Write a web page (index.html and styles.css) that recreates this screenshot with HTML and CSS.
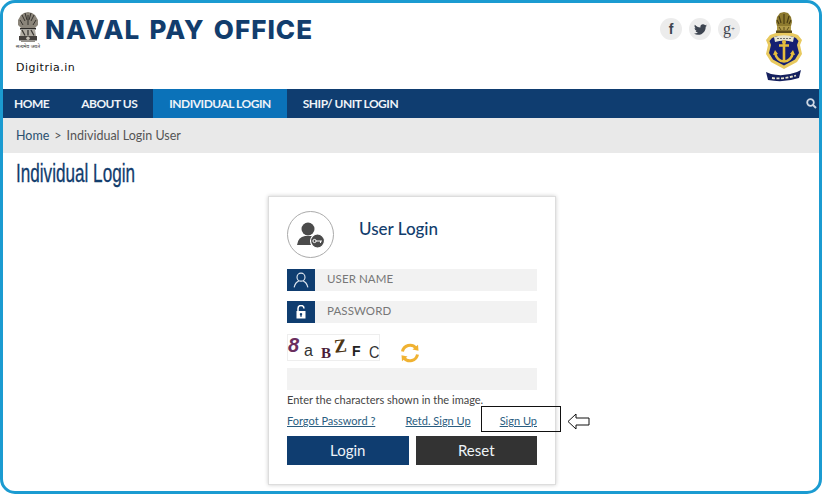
FILE: index.html
```html
<!DOCTYPE html>
<html lang="en">
<head>
    <meta charset="UTF-8">
    <title>Naval Pay Office</title>
    <link rel="stylesheet" href="styles.css">
</head>
<body>
    <div class="frame">
        <div class="header">
            <div class="brand">
                <div class="brand-top">
                    <svg class="emblem" width="28" height="37" viewBox="0 0 28 37">
                        <path d="M7 3 L10 1 L14 0 L18 1 L21 3 L24 8 L24 13 L21 16 H7 L4 13 L4 8Z" fill="#8b857a"/>
                        <path d="M8 3 L11 9 M11 1 L13 8 M17 1 L15 8 M20 3 L17 9 M6 8 L9 13 M22 8 L19 13 M14 3 V13" stroke="#35322d" stroke-width="1"/>
                        <rect x="6" y="16" width="16" height="1.500" fill="#2c2a27"/>
                        <path d="M7 17.500 H21 L22 24 H6Z" fill="#b0aba1"/>
                        <path d="M8 18 L11 23.500 M17 18 L20 23.500 M14 18 V23.500" stroke="#3a3733" stroke-width="1.300"/>
                        <rect x="5" y="24" width="18" height="4.500" fill="#46423e"/>
                        <circle cx="14" cy="26.200" r="1.700" fill="#c4bfb5"/>
                        <rect x="7" y="28.500" width="14" height="1.500" fill="#94908a"/>
                        <text x="14" y="36" class="emblem-text" text-anchor="middle">सत्यमेव जयते</text>
                    </svg>
                    <span class="brand-name">NAVAL PAY OFFICE</span>
                </div>
                <div class="brand-sub">Digitria.in</div>
            </div>
            <div class="social">
                <a href="#" class="social-btn social-f">f</a>
                <a href="#" class="social-btn">
                    <svg width="13" height="13" viewBox="0 0 24 24"><path fill="#3d4450" d="M23.953 4.57a10 10 0 01-2.825.775 4.958 4.958 0 002.163-2.723c-.951.555-2.005.959-3.127 1.184a4.92 4.92 0 00-8.384 4.482C7.69 8.095 4.067 6.13 1.64 3.162a4.822 4.822 0 00-.666 2.475c0 1.71.87 3.213 2.188 4.096a4.904 4.904 0 01-2.228-.616v.06a4.923 4.923 0 003.946 4.827 4.996 4.996 0 01-2.212.085 4.936 4.936 0 004.604 3.417 9.867 9.867 0 01-6.102 2.105c-.39 0-.779-.023-1.17-.067a13.995 13.995 0 007.557 2.209c9.053 0 13.998-7.496 13.998-14.015 0-.21-.005-.42-.015-.63A9.935 9.935 0 0024 4.59z"/></svg>
                </a>
                <a href="#" class="social-btn social-g">g<sup>+</sup></a>
            </div>
            <svg class="crest" width="40" height="71" viewBox="0 0 40 71">
                <path d="M13 5 L16 1 L20 0 L24 1 L27 5 L28 10 L27 14 L13 14 L12 10Z" fill="#8d7a2f"/>
                <path d="M15 4 L17 11 M20 2 V12 M25 4 L23 11 M13 8 L15 12 M27 8 L25 12" stroke="#4a3d14" stroke-width="1.200"/>
                <rect x="13" y="14" width="14" height="5" fill="#b09a48"/>
                <path d="M15 15 L17 18 M20 15 V18 M25 15 L23 18" stroke="#5d4e1c"/>
                <rect x="12" y="18.500" width="16" height="3" fill="#5d4e1c"/>
                <path d="M6 23 L12 21 H28 L34 23 L38 28 L36 33 L38 42 L33 50 L20 57 L7 50 L2 42 L4 33 L2 28Z" fill="#e8c95e"/>
                <path d="M8 26 L13 24 H27 L32 26 L34.500 29 L33 33 L35 41 L31 47.500 L20 53.500 L9 47.500 L5 41 L7 33 L5.500 29Z" fill="#151f72"/>
                <path d="M10 25 Q20 21.500 30 25 L29 30 Q20 27 11 30Z" fill="#e6e4d0"/>
                <path d="M13 26.500 H27" stroke="#555" stroke-width="0.800" stroke-dasharray="2 1"/>
                <path d="M20 30 V49 M15 33.500 H25 M11 41 Q13 49 20 49.500 Q27 49 29 41" stroke="#e4bd3e" stroke-width="2.600" fill="none"/>
                <path d="M9 43 L11 38 L14 42Z M31 43 L29 38 L26 42Z" fill="#e4bd3e"/>
                <circle cx="20" cy="30" r="2" fill="#e4bd3e"/>
                <path d="M2 60 L7 62 Q20 65 33 60 L37 58 L35 66 Q20 71 4 68Z" fill="#15205e"/>
                <path d="M8 66 Q20 67.500 32 63.500" stroke="#e6e4d0" stroke-width="1.800" stroke-dasharray="3 1.500" fill="none"/>
            </svg>
        </div>

        <div class="nav">
            <a href="#" class="nav-item nav-first">HOME</a>
            <a href="#" class="nav-item">ABOUT US</a>
            <a href="#" class="nav-item nav-active">INDIVIDUAL LOGIN</a>
            <a href="#" class="nav-item">SHIP/ UNIT LOGIN</a>
            <svg class="nav-search" width="11" height="11" viewBox="0 0 11 11">
                <circle cx="4.500" cy="4.500" r="3.300" fill="none" stroke="#cfd8e4" stroke-width="1.800"/>
                <path d="M7 7 L10 10" stroke="#cfd8e4" stroke-width="2"/>
            </svg>
        </div>

        <div class="crumb">
            <a href="#">Home</a>
            <span class="crumb-sep">&gt;</span>
            <span>Individual Login User</span>
        </div>

        <h1 class="page-title">Individual Login</h1>

        <!-- login box -->
        <div class="login">
            <div class="login-head">
                <div class="avatar">
                    <svg width="30" height="28" viewBox="0 0 30 28">
                        <circle cx="12" cy="8" r="6.500" fill="#4b4b4b"/>
                        <path d="M1 24 Q2 16 9 15 L15 15 Q21 16 23 22 L23 24Z" fill="#4b4b4b"/>
                        <circle cx="21.500" cy="20" r="7" fill="#4b4b4b" stroke="#fff" stroke-width="1.200"/>
                        <circle cx="18.500" cy="20" r="1.600" fill="none" stroke="#fff"/>
                        <path d="M20 20 H26 M24.500 20 V22" stroke="#fff" stroke-width="1.100"/>
                    </svg>
                </div>
                <h2 class="login-title">User Login</h2>
            </div>

            <div class="login-input">
                <span class="input-icon">
                    <svg width="16" height="16" viewBox="0 0 14 14" fill="none" stroke="#dfe6ef" stroke-width="1">
                        <circle cx="7" cy="4.500" r="3.500"/>
                        <path d="M1 13.500 Q2 9 5 8 M13 13.500 Q12 9 9 8"/>
                    </svg>
                </span>
                <span class="input-text">USER NAME</span>
            </div>
            <div class="login-input">
                <span class="input-icon">
                    <svg width="10" height="14" viewBox="0 0 10 14">
                        <path d="M2 6 V3.500 A3 3 0 0 1 8 3.500" fill="none" stroke="#fff" stroke-width="1.500"/>
                        <path d="M0.500 6 H9.500 V13.500 H0.500Z M5 8 A1.200 1.200 0 0 0 4.300 10.200 V11.800 H5.700 V10.200 A1.200 1.200 0 0 0 5 8Z" fill="#fff" fill-rule="evenodd"/>
                    </svg>
                </span>
                <span class="input-text">PASSWORD</span>
            </div>

            <div class="captcha-row">
                <div class="captcha">
                    <span class="cap cap-1">8</span>
                    <span class="cap cap-2">a</span>
                    <span class="cap cap-3">B</span>
                    <span class="cap cap-4">Z</span>
                    <span class="cap cap-5">F</span>
                    <span class="cap cap-6">C</span>
                </div>
                <svg class="refresh" width="20" height="20" viewBox="0 0 20 20" fill="none" stroke="#f0b232" stroke-width="3">
                    <path d="M2.500 8.500 A7.700 7.700 0 0 1 16 5"/>
                    <path d="M17.500 11.500 A7.700 7.700 0 0 1 4 15"/>
                    <path d="M12.500 6.500 L18.500 7.800 L18 1.800Z" fill="#f0b232" stroke="none"/>
                    <path d="M7.500 13.500 L1.500 12.200 L2 18.200Z" fill="#f0b232" stroke="none"/>
                </svg>
            </div>

            <div class="captcha-input"></div>
            <p class="captcha-hint">Enter the characters shown in the image.</p>

            <div class="login-links">
                <a href="#">Forgot Password ?</a>
                <a href="#" class="link-retd">Retd. Sign Up</a>
                <a href="#" class="link-signup">Sign Up</a>
            </div>

            <div class="login-buttons">
                <a href="#" class="btn btn-login">Login</a>
                <a href="#" class="btn btn-reset">Reset</a>
            </div>

            <!-- annotation over the sign up link -->
            <div class="mark-box"></div>
            <svg class="mark-arrow" width="23" height="17" viewBox="0 0 23 17">
                <path d="M1 8.500 L9 1 V5 H22 V12 H9 V16Z" fill="#fff" stroke="#111" stroke-width="1"/>
            </svg>
        </div>
    </div>
</body>
</html>
```

FILE: styles.css
```css
* {
    margin: 0;
    padding: 0;
    box-sizing: border-box;
}

html, body {
    width: 822px;
    height: 494px;
    overflow: hidden;
    background-color: #fff;
}

body {
    font-family: Lato, "Liberation Sans", sans-serif;
    color: #333;
}

a {
    text-decoration: none;
    color: inherit;
}

.frame {
    width: 822px;
    height: 494px;
    border: 3px solid #1b9bd1;
    border-radius: 15px;
    overflow: hidden;
    background-color: #fff;
}

/* header */
.header {
    display: flex;
    height: 86px;
    padding: 9px 15px 0 11px;
}

.brand {
    flex: 1;
}

.brand-top {
    display: flex;
    align-items: flex-start;
}

.emblem {
    display: block;
}

.emblem-text {
    font-family: "Noto Sans", "Liberation Sans", sans-serif;
    font-size: 5px;
    fill: #333;
}

.brand-name {
    margin: 5px 0 0 3px;
    font-family: Inter, "Liberation Sans", sans-serif;
    font-size: 26px;
    line-height: 26px;
    font-weight: 800;
    letter-spacing: 1px;
    word-spacing: 2.5px;
    color: #123d6d;
    white-space: nowrap;
}

.brand-sub {
    margin: 12px 0 0 2px;
    font-family: "DejaVu Sans", sans-serif;
    font-size: 11px;
    line-height: 14px;
    letter-spacing: 0.5px;
    color: #111;
}

.social {
    display: flex;
    gap: 7px;
    margin: 6px 24px 0 0;
}

.social-btn {
    display: flex;
    align-items: center;
    justify-content: center;
    width: 22px;
    height: 22px;
    border-radius: 50%;
    background-color: #ececec;
    color: #3d4450;
}

.social-f {
    font-family: "Liberation Sans", sans-serif;
    font-weight: 700;
    font-size: 14px;
}

.social-g {
    font-family: "Liberation Serif", serif;
    font-size: 16px;
}

.social-g sup {
    font-size: 7px;
}

.crest {
    display: block;
}

/* nav */
.nav {
    display: flex;
    align-items: center;
    height: 29px;
    padding-right: 2px;
    background-color: #0f3d70;
}

.nav-item {
    display: flex;
    align-items: center;
    height: 100%;
    padding: 0 16px;
    font-size: 12px;
    font-weight: 700;
    letter-spacing: -0.5px;
    color: #eef3f8;
    white-space: nowrap;
}

.nav-first {
    padding-left: 11px;
}

.nav-active {
    background-color: #0b72b9;
}

.nav-search {
    margin-left: auto;
}

/* breadcrumb */
.crumb {
    display: flex;
    align-items: center;
    gap: 5px;
    height: 35px;
    padding-left: 13px;
    background-color: #e9e9e9;
    font-size: 12.5px;
    color: #555;
}

.crumb a {
    color: #29506f;
}

.page-title {
    width: 174px;
    padding: 6px 0 0 13px;
    font-family: "Liberation Sans", sans-serif;
    font-size: 25px;
    line-height: 28px;
    font-weight: 400;
    color: #123d6d;
    white-space: nowrap;
    -webkit-text-stroke: 0.3px #123d6d;
    transform: scaleX(0.685);
    transform-origin: 13px 0;
}

/* login box */
.login {
    position: relative;
    width: 288px;
    height: 289px;
    margin: 9px 0 0 265px;
    padding: 14px 18px 0;
    border: 1px solid #ddd;
    background-color: #fff;
    box-shadow: 0 0 4px #ccc;
}

.login-head {
    display: flex;
    height: 47px;
}

.avatar {
    display: flex;
    align-items: center;
    justify-content: center;
    width: 47px;
    height: 47px;
    border: 1px solid #aaa;
    border-radius: 50%;
}

.login-title {
    margin: 8px 0 0 25px;
    font-size: 17px;
    line-height: 20px;
    font-weight: 500;
    color: #123d6d;
}

.login-input {
    display: flex;
    height: 22px;
    margin-top: 10px;
    background-color: #f2f2f2;
}

.login-head + .login-input {
    margin-top: 11px;
}

.input-icon {
    display: flex;
    align-items: center;
    justify-content: center;
    width: 28px;
    background-color: #0f3d70;
}

.input-text {
    margin-left: 12px;
    font-size: 11.5px;
    line-height: 20px;
    letter-spacing: 0.1px;
    color: #777;
}

.captcha-row {
    display: flex;
    align-items: flex-start;
    height: 27px;
    margin-top: 11px;
}

.captcha {
    position: relative;
    width: 93px;
    height: 27px;
    border: 1px solid #eee;
}

.cap {
    position: absolute;
    font-family: "Liberation Sans", sans-serif;
    line-height: 1;
}

.cap-1 {
    left: 0;
    top: 0;
    font-size: 20px;
    font-weight: 700;
    font-style: italic;
    color: #6a2f5e;
}

.cap-2 {
    left: 16px;
    top: 8px;
    font-size: 16px;
    color: #333;
}

.cap-3 {
    left: 33px;
    top: 11px;
    font-size: 15px;
    font-weight: 700;
    font-family: "Liberation Serif", serif;
    color: #4a1d3a;
}

.cap-4 {
    left: 46px;
    top: 1px;
    font-size: 19px;
    font-weight: 700;
    font-family: "Liberation Serif", serif;
    color: #4d3513;
    transform: rotate(-6deg);
}

.cap-5 {
    left: 64px;
    top: 9px;
    font-size: 14px;
    font-weight: 700;
    color: #222;
}

.cap-6 {
    left: 80px;
    top: 9px;
    font-size: 17px;
    color: #333;
    transform: scaleX(0.85);
}

.refresh {
    margin: 9px 0 0 20px;
}

.captcha-input {
    height: 22px;
    margin-top: 7px;
    background-color: #f2f2f2;
}

.captcha-hint {
    margin-top: 3px;
    font-size: 11px;
    line-height: 14px;
    color: #444;
}

.login-links {
    display: flex;
    margin-top: 7px;
    font-size: 11px;
    line-height: 14px;
    color: #2a5d80;
}

.login-links a {
    text-decoration: underline;
}

.link-retd {
    margin-left: auto;
}

.link-signup {
    margin-left: 29px;
}

.login-buttons {
    display: flex;
    gap: 7px;
    margin-top: 8px;
}

.btn {
    flex: 1;
    height: 29px;
    font-size: 15px;
    line-height: 28px;
    text-align: center;
    color: #eef3f8;
}

.btn-login {
    background-color: #0f3d70;
}

.btn-reset {
    background-color: #333;
}

.mark-box {
    position: absolute;
    left: 212px;
    top: 209px;
    width: 80px;
    height: 26px;
    border: 1px solid #111;
}

.mark-arrow {
    position: absolute;
    left: 298px;
    top: 216px;
}
```
